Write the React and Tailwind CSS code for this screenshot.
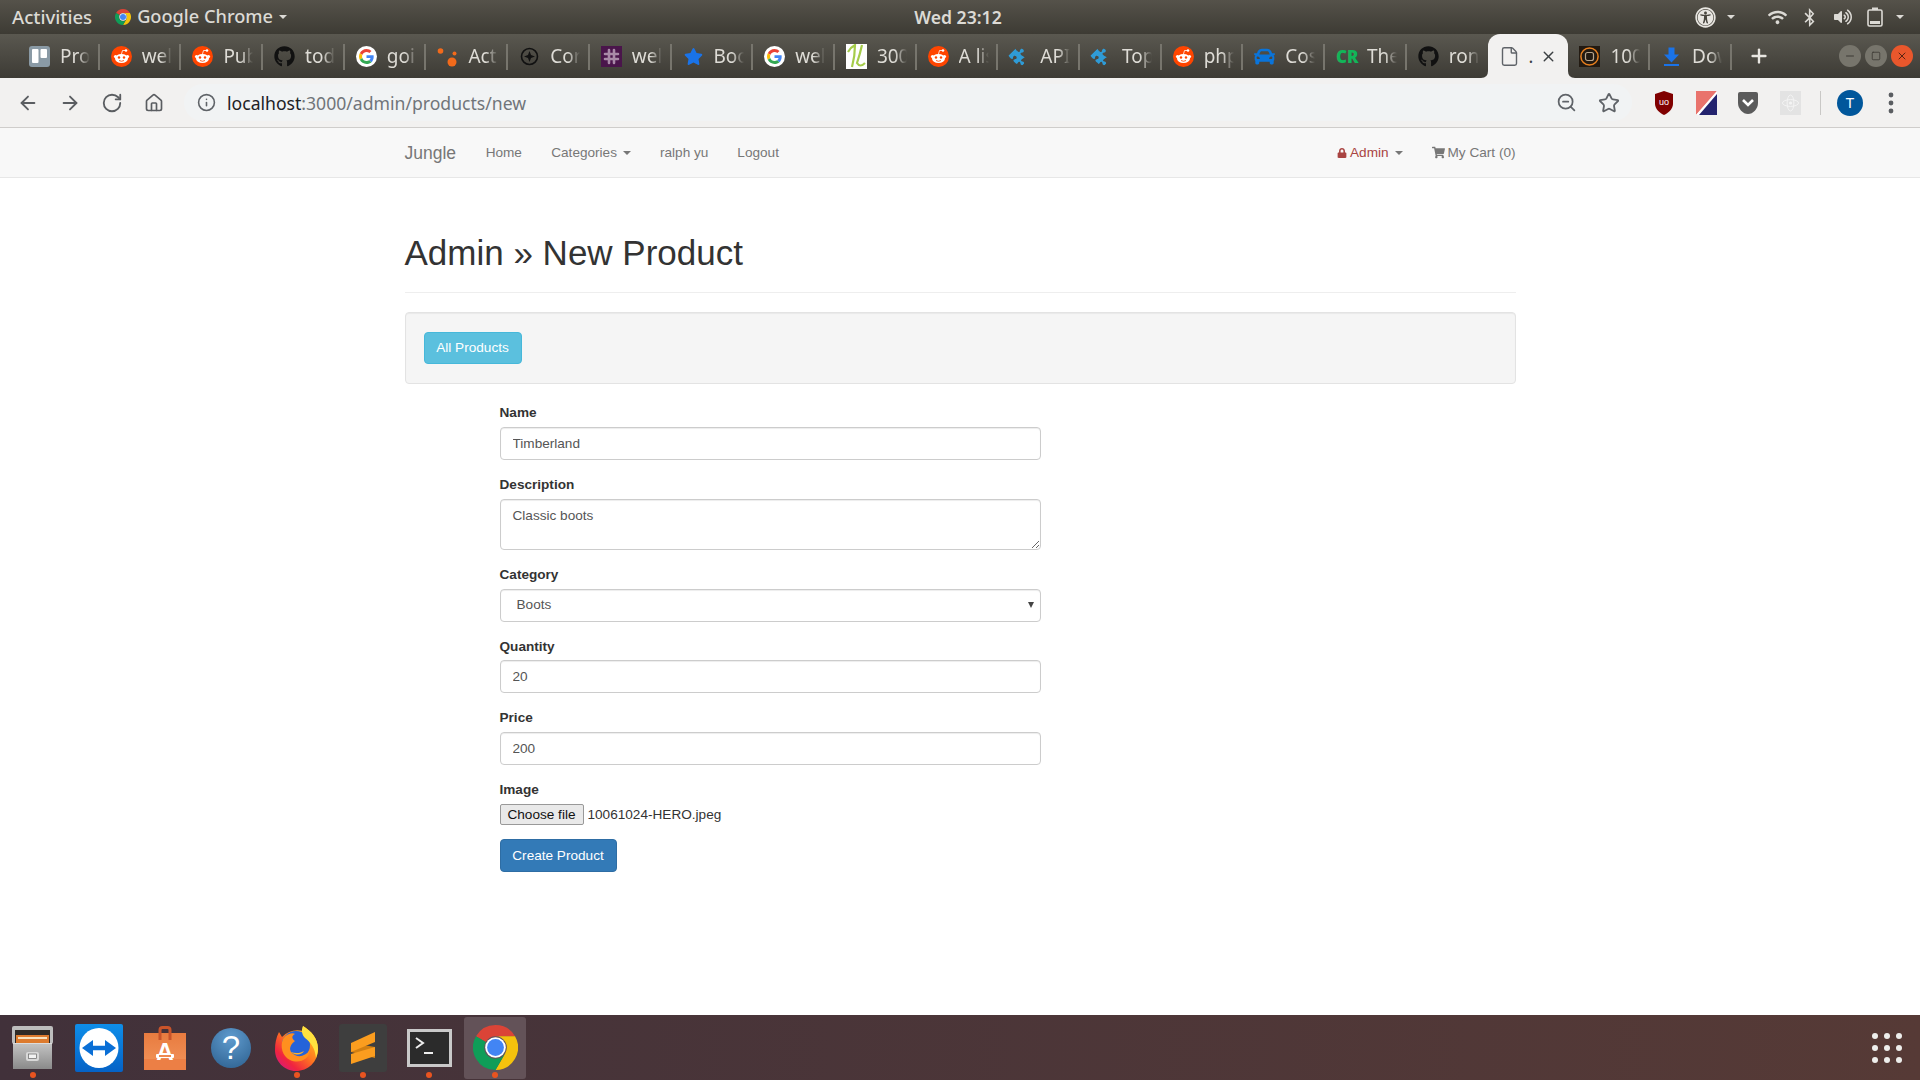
import { ArrowLeft, ArrowRight, RotateCw, House, Info, ZoomOut, Star, File, Plus, X, Minus, Square } from "lucide-react";
import { FaGithub, FaStar, FaPuzzlePiece, FaCar, FaUniversalAccess, FaBluetoothB, FaVolumeUp, FaWifi, FaLock, FaShoppingCart } from "react-icons/fa";

const uiFont = "font-['Noto_Sans','Open_Sans',sans-serif]";

// ===== favicons =====
const Reddit = () => (
  <svg width="21" height="21" viewBox="0 0 21 21">
    <circle cx="10.5" cy="10.5" r="10.5" fill="#ff4500" />
    <ellipse cx="10.5" cy="12.5" rx="6.5" ry="4.5" fill="#fff" />
    <circle cx="4.5" cy="10.5" r="1.6" fill="#fff" />
    <circle cx="16.5" cy="10.5" r="1.6" fill="#fff" />
    <circle cx="15" cy="4.5" r="1.3" fill="#fff" />
    <path d="M10.5 8 L11.5 4.5 L15 4.5" fill="none" stroke="#fff" strokeWidth="0.8" />
    <circle cx="8" cy="11.5" r="1.2" fill="#ff4500" />
    <circle cx="13" cy="11.5" r="1.2" fill="#ff4500" />
    <path d="M8 14.5 Q10.5 16 13 14.5" fill="none" stroke="#ff4500" strokeWidth="0.8" />
  </svg>
);

const Google = () => (
  <svg width="21" height="21" viewBox="0 0 21 21">
    <circle cx="10.5" cy="10.5" r="10.5" fill="#fff" />
    <g transform="translate(3 3) scale(0.3125)">
      <path fill="#EA4335" d="M24 9.5c3.54 0 6.71 1.22 9.21 3.6l6.85-6.85C35.9 2.38 30.47 0 24 0 14.62 0 6.51 5.38 2.56 13.22l7.98 6.19C12.43 13.72 17.74 9.5 24 9.5z" />
      <path fill="#4285F4" d="M46.98 24.55c0-1.57-.15-3.09-.38-4.55H24v9.02h12.94c-.58 2.96-2.26 5.48-4.78 7.18l7.73 6c4.51-4.18 7.09-10.36 7.09-17.65z" />
      <path fill="#FBBC05" d="M10.53 28.59c-.48-1.45-.76-2.99-.76-4.59s.27-3.14.76-4.59l-7.98-6.19C.92 16.46 0 20.12 0 24c0 3.88.92 7.54 2.56 10.78l7.97-6.19z" />
      <path fill="#34A853" d="M24 48c6.48 0 11.93-2.13 16.01-5.81l-7.73-6c-2.15 1.45-4.92 2.3-8.28 2.3-6.26 0-11.57-4.22-13.47-9.91l-7.98 6.19C6.51 42.62 14.62 48 24 48z" />
    </g>
  </svg>
);

const Trello = () => (
  <svg width="21" height="21" viewBox="0 0 21 21">
    <rect width="21" height="21" rx="3" fill="#8a9aa5" />
    <rect x="3" y="3" width="6.5" height="14" rx="1" fill="#fff" />
    <rect x="11.5" y="3" width="6.5" height="9" rx="1" fill="#fff" />
  </svg>
);

const Dots = () => (
  <svg width="21" height="21" viewBox="0 0 21 21">
    <circle cx="3.5" cy="5" r="2.8" fill="#f26a1b" />
    <circle cx="17.5" cy="7.5" r="2" fill="#f26a1b" />
    <circle cx="15" cy="16" r="4.5" fill="#f26a1b" />
  </svg>
);

const Compass = () => (
  <svg width="21" height="21" viewBox="0 0 21 21">
    <circle cx="10.5" cy="10.5" r="8" fill="none" stroke="#111" strokeWidth="1.6" />
    <path d="M10.5 5 L12 9 L16 10.5 L12 12 L10.5 16 L9 12 L5 10.5 L9 9 Z" fill="#111" />
  </svg>
);

const Slack = () => (
  <svg width="21" height="21" viewBox="0 0 21 21">
    <rect width="21" height="21" fill="#4a154b" />
    <path d="M8 4v13M13 4v13M4 8h13M4 13h13" stroke="#a98aa8" strokeWidth="2.6" strokeLinecap="round" />
  </svg>
);

const Scribble = () => (
  <svg width="21" height="25" viewBox="0 0 21 25">
    <rect width="21" height="25" fill="#fff" />
    <path d="M2 8 Q5 3 9 1 Q9 12 6 23 M16 1 Q14 10 11 19 Q14 24 19 19" fill="none" stroke="#a5cc4a" strokeWidth="2.2" />
  </svg>
);

const Seal = () => (
  <svg width="21" height="21" viewBox="0 0 21 21">
    <rect width="21" height="21" fill="#221a12" />
    <circle cx="10.5" cy="10.5" r="8.6" fill="none" stroke="#e8801f" strokeWidth="1.5" />
    <rect x="6.5" y="6.5" width="8" height="8" rx="2" fill="none" stroke="#b9a58c" strokeWidth="1.2" />
  </svg>
);

const Download = () => (
  <svg width="21" height="21" viewBox="0 0 21 21">
    <path d="M7.5 1.5h6v7h4.5l-7.5 8-7.5-8h4.5z" fill="#1a73e8" />
    <rect x="3" y="18" width="15" height="2" fill="#1a73e8" />
  </svg>
);

const Puzzle = () => <FaPuzzlePiece size={17} color="#2f9bd6" className="rotate-45" />;

const tabs = [
  { icon: <Trello />, text: "Pro" },
  { icon: <Reddit />, text: "wel" },
  { icon: <Reddit />, text: "Pub" },
  { icon: <FaGithub size={21} color="#111" />, text: "tod" },
  { icon: <Google />, text: "goi" },
  { icon: <Dots />, text: "Act" },
  { icon: <Compass />, text: "Cor" },
  { icon: <Slack />, text: "wel" },
  { icon: <FaStar size={19} color="#1a73e8" />, text: "Boo" },
  { icon: <Google />, text: "wel" },
  { icon: <Scribble />, text: "300" },
  { icon: <Reddit />, text: "A lis" },
  { icon: <Puzzle />, text: "API" },
  { icon: <Puzzle />, text: "Top" },
  { icon: <Reddit />, text: "php" },
  { icon: <FaCar size={21} color="#0a74da" />, text: "Cos" },
  { icon: <span className="w-[21px] text-[17px] leading-[21px] font-black text-[#12b559]">CR</span>, text: "The" },
  { icon: <FaGithub size={21} color="#111" />, text: "ron", noSep: true },
  { active: true },
  { icon: <Seal />, text: "100" },
  { icon: <Download />, text: "Dow" },
];

function Tab({ tab }) {
  if (tab.active) {
    return (
      <div className="relative flex h-[44px] w-[80px] shrink-0 items-center rounded-t-[12px] bg-[#f2f1f0] pl-[11px]">
        <File size={21} strokeWidth={1.6} color="#5f6368" />
        <span className="ml-[8px] text-[18px] text-[#3c4043]">.</span>
        <X size={17} strokeWidth={2} color="#3c4043" className="ml-[7px]" />
        <svg className="absolute bottom-0 left-[-7px]" width="7" height="7" viewBox="0 0 7 7">
          <path d="M7 0 V7 H0 Q7 7 7 0 Z" fill="#f2f1f0" />
        </svg>
        <svg className="absolute right-[-7px] bottom-0" width="7" height="7" viewBox="0 0 7 7">
          <path d="M0 0 V7 H7 Q0 7 0 0 Z" fill="#f2f1f0" />
        </svg>
      </div>
    );
  }
  return (
    <div className="relative flex h-[44px] w-[81.7px] shrink-0 items-center pl-[11px]">
      <div className="flex w-[21px] shrink-0 items-center justify-center">{tab.icon}</div>
      <span className="ml-[10px] w-[30px] overflow-hidden text-[19px] whitespace-nowrap text-[#dedcd6] [mask-image:linear-gradient(to_right,black_60%,transparent)]">
        {tab.text}
      </span>
      {!tab.noSep && <div className="absolute top-[10px] right-0 h-[26px] w-[2px] bg-[#77756d]" />}
    </div>
  );
}

// ===== dock icons =====
const ChromeLogo = ({ size }) => (
  <svg width={size} height={size} viewBox="0 0 48 48">
    <path fill="#db4437" d="M24 0A24 24 0 0 1 44.8 12H24A12 12 0 0 0 13.6 18L3.2 12A24 24 0 0 1 24 0Z" />
    <path fill="#f4c20d" d="M44.8 12A24 24 0 0 1 24 48L34.4 30A12 12 0 0 0 24 12Z" />
    <path fill="#0f9d58" d="M3.2 12A24 24 0 0 0 24 48L34.4 30A12 12 0 0 1 13.6 18Z" />
    <circle cx="24" cy="24" r="11" fill="#fff" />
    <circle cx="24" cy="24" r="9" fill="#4285f4" />
  </svg>
);

const FilesIcon = () => (
  <svg width="42" height="44" viewBox="0 0 42 44">
    <defs>
      <linearGradient id="cabinet" x1="0" y1="0" x2="0" y2="1">
        <stop offset="0" stopColor="#c4c4c4" />
        <stop offset="1" stopColor="#8a8a8a" />
      </linearGradient>
    </defs>
    <rect x="0" y="0" width="41" height="18" rx="2" fill="#bdbdbd" />
    <rect x="3" y="4" width="35" height="14" fill="#2f2a26" />
    <rect x="4" y="9" width="33" height="9" fill="#dd7b2e" />
    <rect x="6" y="11" width="29" height="2" fill="#f8e2bf" />
    <rect x="1" y="17" width="39" height="26" fill="url(#cabinet)" />
    <rect x="1" y="17" width="39" height="1" fill="#dcdcdc" />
    <rect x="14" y="26" width="13" height="9" rx="2" fill="#d8d8d8" />
    <rect x="16.5" y="28" width="8" height="4.5" fill="#f2f2f2" stroke="#666" strokeWidth="0.7" />
  </svg>
);

const TeamViewer = () => (
  <svg width="48" height="48" viewBox="0 0 48 48">
    <defs>
      <linearGradient id="tv" x1="0" y1="0" x2="0" y2="1">
        <stop offset="0" stopColor="#0e8ee9" />
        <stop offset="1" stopColor="#0562c6" />
      </linearGradient>
    </defs>
    <rect width="48" height="48" rx="2" fill="url(#tv)" />
    <ellipse cx="24" cy="24" rx="19.5" ry="20" fill="#fff" />
    <path d="M7 24 L18 16 V21.8 H30 V16 L41 24 L30 32 V26.2 H18 V32 Z" fill="#0a6fd6" />
  </svg>
);

const StoreIcon = () => (
  <svg width="42" height="44" viewBox="0 0 42 44">
    <defs>
      <linearGradient id="bag" x1="0" y1="0" x2="0" y2="1">
        <stop offset="0" stopColor="#e87b3f" />
        <stop offset="1" stopColor="#f2955c" />
      </linearGradient>
    </defs>
    <path d="M16 14 V4 Q16 1.5 18.5 1.5 H23.5 Q26 1.5 26 4 V14" fill="none" stroke="#c9542a" strokeWidth="3" />
    <rect x="0" y="7" width="42" height="37" fill="url(#bag)" />
    <path d="M16 7 V14 M26 7 V14" stroke="#c9542a" strokeWidth="3" />
    <rect x="0" y="33" width="42" height="11" fill="#ec7f45" />
    <text x="21" y="34" textAnchor="middle" fontSize="24" fontWeight="700" fill="#fff" fontFamily="Liberation Sans">A</text>
    <rect x="12" y="28" width="18" height="4" rx="1" fill="#fff" />
    <rect x="15" y="29" width="12" height="2" fill="#ef8a4f" />
  </svg>
);

const HelpIcon = () => (
  <div className="flex h-[40px] w-[40px] items-center justify-center rounded-full bg-[radial-gradient(circle_at_50%_25%,#5f9bce,#2c5f8e)] text-[33px] leading-none text-white">
    ?
  </div>
);

const FirefoxIcon = () => (
  <svg width="44" height="46" viewBox="0 0 44 46">
    <defs>
      <linearGradient id="ffOuter" x1="0.9" y1="0.1" x2="0.15" y2="0.95">
        <stop offset="0" stopColor="#ffc21f" />
        <stop offset="0.45" stopColor="#ff7a1f" />
        <stop offset="0.8" stopColor="#f0243f" />
        <stop offset="1" stopColor="#d81b77" />
      </linearGradient>
    </defs>
    <path d="M28 1 C36 6 43 13 43 24 C43 37 33 46 21 46 C9 46 0 36 0 25 C0 18 1 13 4 7 L7 12 C13 6 20 4 28 6 Z" fill="url(#ffOuter)" />
    <circle cx="21" cy="20" r="14" fill="#2563d9" />
    <path d="M8 14 C11 9 17 7 20 9 C16 11 17 14 20 16 C16 19 13 24 17 28 C22 33 30 32 35 25 C34 35 24 39 15 35 C7 31 5 21 8 14 Z" fill="#ff8f1f" />
    <path d="M16 27 C21 29 26 28 29 26 C27 30 21 31 16 27 Z" fill="#ffb12a" />
    <path d="M28 1 C36 6 43 13 43 24 C43 27 42 30 41 33 C40 22 35 17 30 13 C27 10 26 5 28 1 Z" fill="#ffe23f" />
  </svg>
);

const SublimeIcon = () => (
  <svg width="48" height="48" viewBox="0 0 48 48">
    <rect width="48" height="48" rx="3" fill="#3e3e3e" />
    <path d="M12 19 L36 23 V34 L12 28 Z" fill="#d27f12" />
    <path d="M12 19 L36 8 V18 L12 28 Z" fill="#fb9d1f" />
    <path d="M12 30 L36 23 V32 L12 40 Z" fill="#fb9d1f" />
  </svg>
);

const TerminalIcon = () => (
  <svg width="45" height="38" viewBox="0 0 45 38">
    <rect width="45" height="38" fill="#c9c9c9" />
    <rect x="3" y="3" width="39" height="32" fill="#2b2b2b" />
    <path d="M9 9 L16 14 L9 19" fill="none" stroke="#eee" strokeWidth="2" />
    <rect x="17" y="23" width="9" height="2" fill="#eee" />
  </svg>
);

const dockItems = [
  { icon: <FilesIcon />, running: true },
  { icon: <TeamViewer /> },
  { icon: <StoreIcon /> },
  { icon: <HelpIcon /> },
  { icon: <FirefoxIcon />, running: true },
  { icon: <SublimeIcon />, running: true },
  { icon: <TerminalIcon />, running: true },
  { icon: <ChromeLogo size={45} />, running: true, focused: true },
];

const Caret = ({ className }) => (
  <span className={`inline-block h-0 w-0 border-x-[4px] border-t-[4px] border-x-transparent ${className}`} />
);

function Field({ label, children, className = "mb-[15px]" }) {
  return (
    <div className={className}>
      <label className="mb-[5px] block h-[18.7px] text-[13.6px] leading-[19px] font-bold text-[#333]">{label}</label>
      {children}
    </div>
  );
}

const inputClass =
  "block h-[33px] w-full rounded-[4px] border border-[#ccc] bg-white px-[12px] text-[13.6px] text-[#555] shadow-[inset_0_1px_1px_rgba(0,0,0,0.075)] outline-none";

export default function App() {
  return (
    <div className="flex h-screen flex-col overflow-hidden bg-white font-['Liberation_Sans',Arial,sans-serif]">
      {/* Top bar */}
      <div className={`flex h-[34px] shrink-0 items-center justify-between bg-linear-to-b from-[#55524a] to-[#3d3b34] pr-[16px] pl-[12px] text-[#dcdad5] ${uiFont}`}>
        <div className="flex flex-1 items-center">
          <span className="text-[18.6px] font-medium">Activities</span>
          <span className="mr-[6px] ml-[23px]">
            <ChromeLogo size={16} />
          </span>
          <span className="text-[18.2px] font-medium">Google Chrome</span>
          <Caret className="ml-[6px] border-t-[#dcdad5]" />
        </div>
        <span className="text-[17.6px] font-semibold">Wed 23:12</span>
        <div className="flex flex-1 items-center justify-end">
          <FaUniversalAccess size={21} color="#e8e6e1" />
          <Caret className="ml-[11px] border-t-[#dcdad5]" />
          <FaWifi size={19} color="#dcdad5" className="ml-[33px]" />
          <FaBluetoothB size={19} color="#dcdad5" className="ml-[13px]" />
          <FaVolumeUp size={18} color="#dcdad5" className="ml-[15px]" />
          <svg className="ml-[15px]" width="16" height="20" viewBox="0 0 16 20">
            <rect x="1" y="3" width="14" height="16" rx="1.5" fill="none" stroke="#dcdad5" strokeWidth="1.6" />
            <rect x="5" y="0.5" width="6" height="2.5" fill="#dcdad5" />
            <rect x="3" y="14" width="10" height="3" fill="#dcdad5" />
          </svg>
          <Caret className="ml-[13px] border-t-[#dcdad5]" />
        </div>
      </div>

      {/* Tab strip */}
      <div className={`flex h-[44px] shrink-0 items-center bg-linear-to-b from-[#5a5850] to-[#3d3b35] pl-[18px] ${uiFont}`}>
        {tabs.map((tab, i) => (
          <Tab key={i} tab={tab} />
        ))}
        <Plus size={22} strokeWidth={2.6} color="#e8e6e1" className="ml-[16px]" />
        <div className="ml-auto flex items-center gap-[4px] pr-[7px]">
          <div className="flex h-[22px] w-[22px] items-center justify-center rounded-full bg-[#77756c]">
            <Minus size={12} color="#3d3b35" />
          </div>
          <div className="flex h-[22px] w-[22px] items-center justify-center rounded-full bg-[#77756c]">
            <Square size={10} color="#3d3b35" />
          </div>
          <div className="flex h-[22px] w-[22px] items-center justify-center rounded-full bg-[#e9572c]">
            <X size={12} color="#5a2412" />
          </div>
        </div>
      </div>

      {/* Browser toolbar */}
      <div className={`flex h-[50px] shrink-0 items-center border-b border-[#cfcdcb] bg-[#f2f1f0] pl-[7px] ${uiFont}`}>
        {[ArrowLeft, ArrowRight, RotateCw, House].map((Icon, i) => (
          <div key={i} className="flex w-[42px] justify-center">
            <Icon size={i === 3 ? 20 : 22} strokeWidth={2} color="#5a5d61" />
          </div>
        ))}
        <div className="ml-[9px] flex h-[37px] w-[1448px] items-center rounded-full bg-[#f1f3f4] pr-[12px] pl-[13px]">
          <Info size={19} strokeWidth={2} color="#5f6368" />
          <span className="ml-[11px] pt-px text-[17.6px] text-[#202124]">
            localhost<span className="text-[#70757a]">:3000/admin/products/new</span>
          </span>
          <ZoomOut size={21} strokeWidth={2} color="#5f6368" className="ml-auto" />
          <Star size={22} strokeWidth={2} color="#5f6368" className="ml-[21px]" />
        </div>
        <div className="ml-[11px] flex items-center">
          <div className="flex w-[42px] justify-center">
            <svg width="20" height="24" viewBox="0 0 20 24">
              <path d="M1 3 L10 0 L19 3 V13 C19 18 14 22 10 24 C6 22 1 18 1 13 Z" fill="#800000" />
              <text x="10" y="14" textAnchor="middle" fontSize="9" fill="#fff" fontFamily="Liberation Sans">uo</text>
            </svg>
          </div>
          <div className="flex w-[42px] justify-center">
            <svg width="21" height="24" viewBox="0 0 21 24">
              <path d="M0 0 H21 L0 24 Z" fill="#e9736c" />
              <path d="M21 0 V24 H0 Z" fill="#fff" />
              <path d="M21 3 V24 H3 Z" fill="#23236e" />
            </svg>
          </div>
          <div className="flex w-[42px] justify-center">
            <svg width="22" height="22" viewBox="0 0 22 22">
              <path d="M1 2 Q1 0 3 0 H19 Q21 0 21 2 V11 C21 17 16 22 11 22 C6 22 1 17 1 11 Z" fill="#5b5b5b" />
              <path d="M6 8 L11 13 L16 8" fill="none" stroke="#fff" strokeWidth="2.6" />
            </svg>
          </div>
          <div className="flex w-[42px] justify-center">
            <svg width="21" height="24" viewBox="0 0 21 24">
              <rect width="21" height="24" fill="#e3e3e3" />
              <ellipse cx="10.5" cy="12" rx="8" ry="3.4" fill="none" stroke="#f4f4f4" />
              <ellipse cx="10.5" cy="12" rx="3.4" ry="8" fill="none" stroke="#f4f4f4" />
              <circle cx="10.5" cy="12" r="1.6" fill="#f4f4f4" />
            </svg>
          </div>
        </div>
        <div className="ml-[9px] h-[24px] w-px bg-[#c9c8c6]" />
        <div className="ml-[16px] flex h-[26px] w-[26px] items-center justify-center rounded-full bg-[#01579b] text-[15px] text-white">T</div>
        <svg className="ml-[25px]" width="6" height="22" viewBox="0 0 6 22">
          <circle cx="3" cy="3" r="2.4" fill="#5a5d61" />
          <circle cx="3" cy="11" r="2.4" fill="#5a5d61" />
          <circle cx="3" cy="19" r="2.4" fill="#5a5d61" />
        </svg>
      </div>

      {/* Navbar */}
      <nav className="h-[50px] shrink-0 border-b border-[#e7e7e7] bg-[#f8f8f8] pt-px">
        <div className="mx-auto flex h-full w-[1111px] items-center justify-between text-[13.6px] text-[#777]">
          <div className="flex items-center">
            <span className="pr-[14.8px] text-[17.5px]">Jungle</span>
            <a className="px-[14.8px]">Home</a>
            <a className="flex items-center px-[14.5px]">
              Categories
              <Caret className="ml-[6px] border-t-[#777]" />
            </a>
            <a className="px-[14.5px]">ralph yu</a>
            <a className="px-[14.5px]">Logout</a>
          </div>
          <div className="-mr-[14.5px] flex items-center">
            <a className="flex items-center px-[14.5px] text-[#a94442]">
              <FaLock size={10} className="mr-[3px]" />
              Admin
              <Caret className="ml-[6px] border-t-[#777]" />
            </a>
            <a className="flex items-center px-[14.5px]">
              <FaShoppingCart size={13} className="mr-[3px]" />
              My Cart (0)
            </a>
          </div>
        </div>
      </nav>

      {/* Page */}
      <main className="flex-1">
        <div className="mx-auto w-[1111px]">
          <div className="mt-[55px] mb-[19px] border-b border-[#eee] pb-[19px]">
            <h1 className="text-[35px] leading-[40px] font-normal text-[#333]">Admin » New Product</h1>
          </div>

          <div className="rounded-[4px] border border-[#e3e3e3] bg-[#f5f5f5] pt-[19px] pb-[19px] pl-[18px] shadow-[inset_0_1px_1px_rgba(0,0,0,0.05)]">
            <button className="h-[32px] w-[98px] rounded-[4px] border border-[#46b8da] bg-[#5bc0de] pt-px text-[13.6px] text-white">All Products</button>
          </div>

          <form className="mt-[19px] ml-[95px] w-[541px]">
            <Field label="Name" className="mb-[15.6px]">
              <input className={inputClass} defaultValue="Timberland" />
            </Field>
            <Field label="Description">
              <textarea className="block h-[51px] w-full rounded-[4px] border border-[#ccc] bg-white px-[12px] py-[6px] text-[13.6px] leading-[20px] text-[#555] shadow-[inset_0_1px_1px_rgba(0,0,0,0.075)] outline-none" defaultValue="Classic boots" />
            </Field>
            <Field label="Category">
              <div className="relative">
                <select className={`${inputClass} appearance-none pl-[16px]`} defaultValue="Boots">
                  <option>Boots</option>
                </select>
                <span className="absolute top-[13px] right-[7px] h-0 w-0 border-x-[3.5px] border-t-[6px] border-x-transparent border-t-[#444]" />
              </div>
            </Field>
            <Field label="Quantity">
              <input className={inputClass} defaultValue="20" />
            </Field>
            <Field label="Price">
              <input className={inputClass} defaultValue="200" />
            </Field>
            <Field label="Image" className="mb-[14px]">
              <div className="flex items-center text-[13.6px] text-[#333]">
                <button type="button" className="h-[21px] w-[84px] rounded-[2px] border border-[#999] bg-[#e9e9e9] pt-px text-[13.6px] leading-[18px] text-[#111]">Choose file</button>
                <span className="ml-[4px] pt-px">10061024-HERO.jpeg</span>
              </div>
            </Field>
            <button type="button" className="h-[33px] w-[117px] rounded-[4px] border border-[#2e6da4] bg-[#337ab7] pt-px text-[13.6px] text-white">Create Product</button>
          </form>
        </div>
      </main>

      {/* Dock */}
      <div className="flex h-[65px] shrink-0 items-center bg-linear-to-r from-[#41313a] to-[#563a36]">
        {dockItems.map((item, i) => (
          <div key={i} className="relative flex h-full w-[66px] items-center justify-center">
            {item.focused && <div className="absolute top-[2px] bottom-[1px] left-[2px] w-[62px] rounded-[3px] bg-[#635258]" />}
            <div className="relative">{item.icon}</div>
            {item.running && <div className="absolute bottom-[2px] left-[30px] h-[6px] w-[6px] rounded-full bg-[#e95420]" />}
          </div>
        ))}
        <div className="mr-[18px] ml-auto grid grid-cols-3 gap-[6px]">
          {[...Array(9)].map((_, i) => (
            <div key={i} className="h-[6px] w-[6px] rounded-full bg-[#eeeeec]" />
          ))}
        </div>
      </div>
    </div>
  );
}
